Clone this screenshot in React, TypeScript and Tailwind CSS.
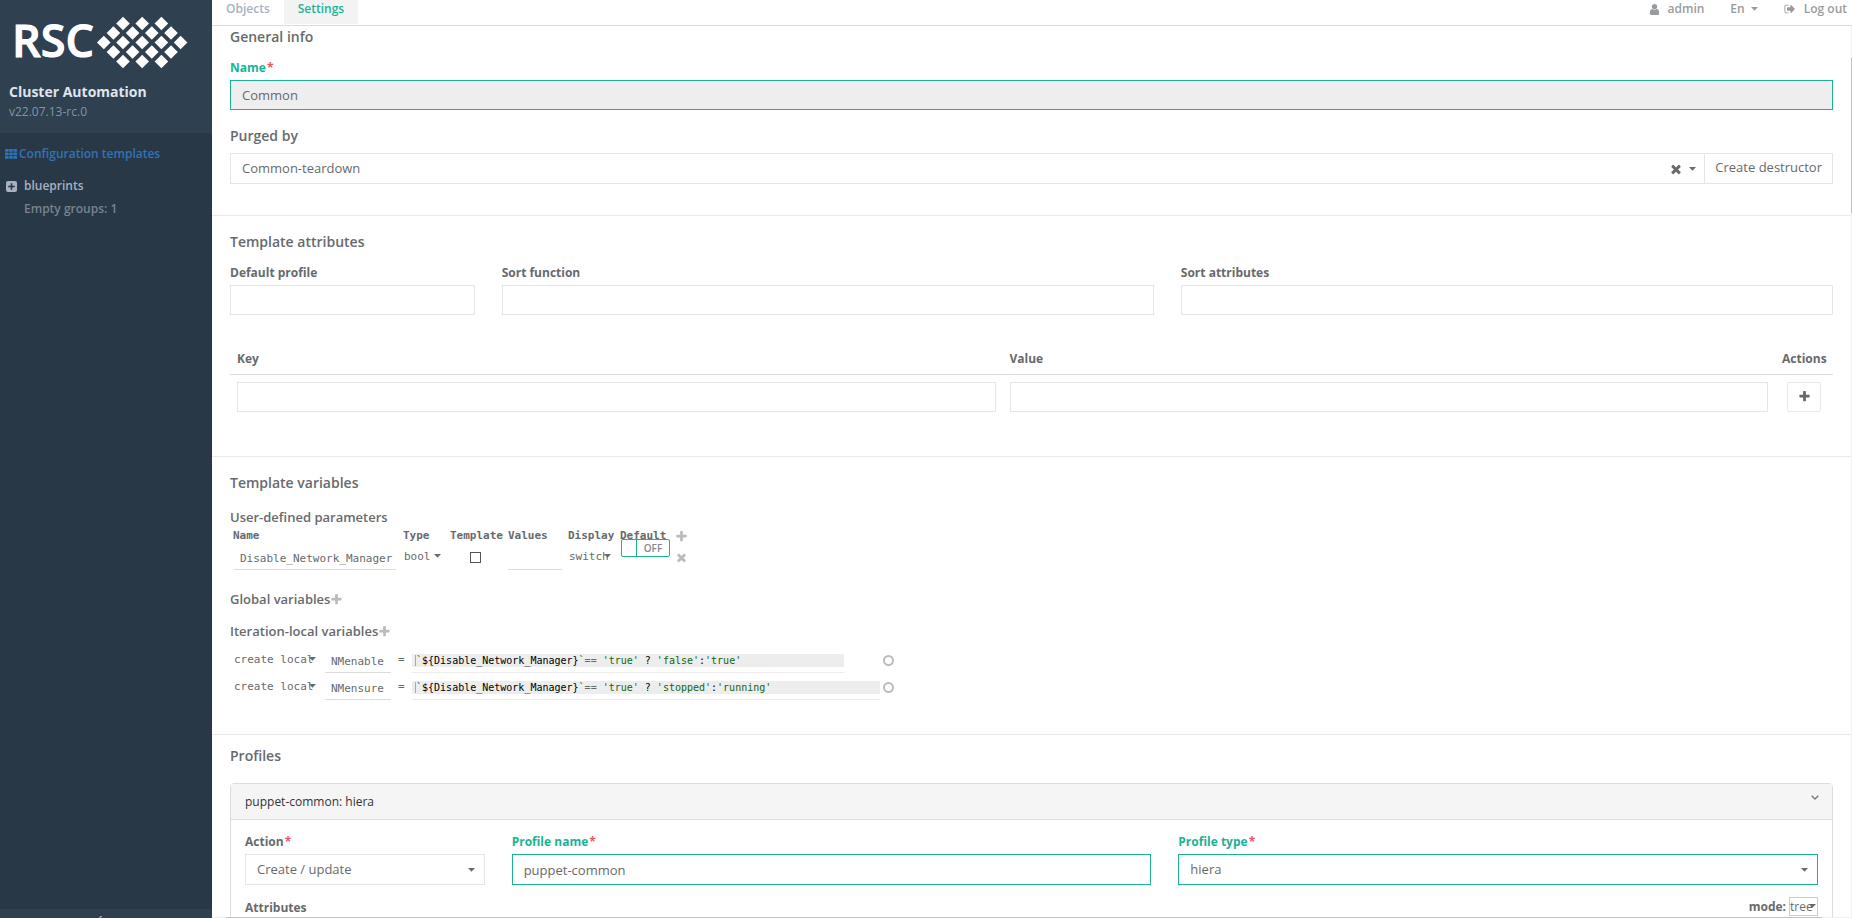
import { useState } from 'react'
import type { ReactNode } from 'react'
import clsx from 'clsx'

const ICONS = {
  plus: 'M1600 736v192q0 40-28 68t-68 28h-416v416q0 40-28 68t-68 28h-192q-40 0-68-28t-28-68v-416h-416q-40 0-68-28t-28-68v-192q0-40 28-68t68-28h416v-416q0-40 28-68t68-28h192q40 0 68 28t28 68v416h416q40 0 68 28t28 68z',
  times: 'M1490 1322q0 40-28 68l-136 136q-28 28-68 28t-68-28l-294-294-294 294q-28 28-68 28t-68-28l-136-136q-28-28-28-68t28-68l294-294-294-294q-28-28-28-68t28-68l136-136q28-28 68-28t68 28l294 294 294-294q28-28 68-28t68 28l136 136q28 28 28 68t-28 68l-294 294 294 294q28 28 28 68z',
  user: 'M1536 1399q0 109-62.5 187t-150.5 78h-854q-88 0-150.5-78t-62.5-187q0-85 8.5-160.5t31.5-152 58.5-131 94-89 134.5-34.5q131 128 313 128t313-128q76 0 134.5 34.5t94 89 58.5 131 31.5 152 8.5 160.5zm-256-887q0 159-112.5 271.5t-271.5 112.5-271.5-112.5-112.5-271.5 112.5-271.5 271.5-112.5 271.5 112.5 112.5 271.5z',
  signOut: 'M704 1440q0 4 1 20t.5 26.5-3 23.5-10 19.5-20.5 6.5h-320q-119 0-203.5-84.5t-84.5-203.5v-704q0-119 84.5-203.5t203.5-84.5h320q13 0 22.5 9.5t9.5 22.5q0 4 1 20t.5 26.5-3 23.5-10 19.5-20.5 6.5h-320q-66 0-113 47t-47 113v704q0 66 47 113t113 47h312l11.5 1 11.5 3 8 5.5 7 9 2 13.5zm928-544q0 26-19 45l-544 544q-19 19-45 19t-45-19-19-45v-288h-448q-26 0-45-19t-19-45v-384q0-26 19-45t45-19h448v-288q0-26 19-45t45-19 45 19l544 544q19 19 19 45z',
}

function Icon({ name, className }: { name: keyof typeof ICONS; className?: string }) {
  return (
    <svg viewBox="0 0 1792 1792" fill="currentColor" aria-hidden="true" className={clsx('shrink-0', className)}>
      <path d={ICONS[name]} />
    </svg>
  )
}

function Caret({ className }: { className?: string }) {
  return (
    <svg viewBox="0 0 7 4" fill="currentColor" aria-hidden="true" className={clsx('h-1 w-[7px] shrink-0', className)}>
      <path d="M0 0h7L3.5 3.8z" />
    </svg>
  )
}

function Logo() {
  const rows = [
    { y: 8.5, xs: [26, 45.2, 64.4] },
    { y: 18, xs: [16.4, 35.6, 54.8, 74] },
    { y: 27.5, xs: [6.8, 26, 45.2, 64.4, 83.6] },
    { y: 37, xs: [16.4, 35.6, 54.8, 74] },
    { y: 46.5, xs: [26, 45.2, 64.4] },
  ]
  return (
    <div className="flex items-start gap-[3px] pl-[3px] text-white">
      <span className="h-[54px] text-[45px] leading-[50px] font-semibold [-webkit-text-stroke:1px_white]">RSC</span>
      <svg viewBox="0 0 91 54" fill="currentColor" aria-hidden="true" className="h-[54px] w-[91px]">
        {rows.map((row) => row.xs.map((x) => (
          <path key={`${x}-${row.y}`} d={`M${x - 6.8} ${row.y}l6.8 -6.8l6.8 6.8l-6.8 6.8z`} />
        )))}
      </svg>
    </div>
  )
}

interface FieldProps {
  id: string
  label: string
  required?: boolean
  valid?: boolean
  className?: string
  children: ReactNode
}

function Field({ id, label, required, valid, className, children }: FieldProps) {
  return (
    <div className={className}>
      <label htmlFor={id} className={clsx('mb-1 block text-xs leading-4 font-bold', valid && 'text-[#1ab394]')}>
        {label}
        {required && <span className="ml-px text-[#ed5565]">*</span>}
      </label>
      {children}
    </div>
  )
}

const inputClass = 'block h-[30px] w-full border border-[#e5e6e7] bg-white px-[11px] text-[13px] outline-none'

interface SelectProps {
  id?: string
  label?: string
  options: string[]
  className?: string
  caretClass: string
}

function Select({ id, label, options, className, caretClass }: SelectProps) {
  return (
    <div className="relative">
      <select id={id} aria-label={label} className={clsx('block appearance-none outline-none', className)}>
        {options.map((option) => <option key={option}>{option}</option>)}
      </select>
      <Caret className={clsx('pointer-events-none absolute', caretClass)} />
    </div>
  )
}

function Section({ title, className, children }: { title: string; className?: string; children: ReactNode }) {
  return (
    <section className={clsx('px-[18px]', className)}>
      <h3 className="text-sm leading-5 font-semibold">{title}</h3>
      {children}
    </section>
  )
}

const locals = [
  { name: 'NMenable', yes: "'false'", no: "'true'", width: 'w-[432px]' },
  { name: 'NMensure', yes: "'stopped'", no: "'running'", width: 'w-[468px]' },
]

function Sidebar() {
  return (
    <aside className="flex w-[212px] shrink-0 flex-col bg-[#293846]">
      <div className="h-[133px] bg-[#2f4050] pt-[15px] pl-[9px]">
        <Logo />
        <h1 className="mt-[13px] text-sm leading-5 font-bold text-[#dfe4ed]">Cluster Automation</h1>
        <p className="text-xs leading-5 text-[#8095a8]">v22.07.13-rc.0</p>
      </div>
      <nav className="flex-1 pt-3 text-xs font-semibold">
        <a href="#templates" className="flex h-[18px] items-center gap-0.5 pl-[5px] text-[#2f74b8]">
          <svg viewBox="0 0 12 10" fill="currentColor" aria-hidden="true" className="h-[10px] w-3">
            {[0, 3.5, 7].map((y) => [0, 4.2, 8.4].map((x) => (
              <rect key={`${x}-${y}`} x={x} y={y} width="3.6" height="2.8" rx="0.4" />
            )))}
          </svg>
          Configuration templates
        </a>
        <div className="mt-[14px] flex h-[18px] items-center gap-[7px] pl-[6px] text-[#a7b1c2]">
          <svg viewBox="0 0 11 11" aria-hidden="true" className="h-[11px] w-[11px]">
            <rect width="11" height="11" rx="2" fill="currentColor" />
            <path d="M4.7 2.2h1.6v2.5h2.5v1.6H6.3v2.5H4.7V6.3H2.2V4.7h2.5z" fill="#293846" />
          </svg>
          blueprints
        </div>
        <p className="mt-[5px] pl-6 leading-[18px] text-[#78838f]">Empty groups: 1</p>
      </nav>
      <footer className="flex h-[9px] items-end bg-[#2f4050] pl-[99px]">
        <svg viewBox="0 0 3 2" fill="none" stroke="#fff" aria-hidden="true" className="h-0.5 w-[3px]">
          <path d="M0.5 2L2.5 0" />
        </svg>
      </footer>
    </aside>
  )
}

function TopBar() {
  return (
    <header className="flex h-[26px] shrink-0 justify-between border-b border-[#d9dbdb] text-xs leading-[18px] font-semibold">
      <nav className="flex">
        <a href="#objects" className="px-[14px] text-[#a7b1c2]">Objects</a>
        <a href="#settings" className="h-6 bg-[#f3f3f4] px-[14px] text-[#1ab394]">Settings</a>
      </nav>
      <div className="flex items-start gap-[26px] pr-[5px] text-[#999c9e]">
        <a href="#admin" className="flex items-center gap-[7px]">
          <Icon name="user" className="h-[13px] w-[13px]" />
          admin
        </a>
        <button type="button" className="flex items-center gap-1.5">
          En
          <Caret />
        </button>
        <a href="#logout" className="flex items-center gap-2">
          <Icon name="signOut" className="h-3 w-3" />
          Log out
        </a>
      </div>
    </header>
  )
}

function Parameters() {
  const [enabled, setEnabled] = useState(false)
  return (
    <table className="mt-px w-[463px] table-fixed font-['DejaVu_Sans_Mono',monospace] text-[11px]">
      <colgroup>
        <col className="w-[170px]" />
        <col className="w-[47px]" />
        <col className="w-[58px]" />
        <col className="w-[60px]" />
        <col className="w-[52px]" />
        <col className="w-[56px]" />
        <col className="w-5" />
      </colgroup>
      <thead>
        <tr className="h-4 text-left leading-4">
          {['Name', 'Type', 'Template', 'Values', 'Display', 'Default'].map((name) => (
            <th key={name} className="px-[3px] font-bold">{name}</th>
          ))}
          <th className="pl-0.5">
            <button type="button" aria-label="Add" className="block text-[#bcbcbc]">
              <Icon name="plus" className="h-[13px] w-[13px]" />
            </button>
          </th>
        </tr>
      </thead>
      <tbody>
        <tr className="h-[26px]">
          <td className="px-1">
            <input aria-label="Name" defaultValue="Disable_Network_Manager" className="block h-[26px] w-full border-b border-[#dcdcdc] pt-[3px] pl-[6px] outline-none" />
          </td>
          <td className="px-1">
            <Select label="Type" options={['bool']} className="h-[22px] w-full" caretClass="top-2 right-0.5" />
          </td>
          <td className="pr-1.5 pl-1">
            <input type="checkbox" aria-label="Template" className="mx-auto block h-[11px] w-[11px] appearance-none border border-[#555]" />
          </td>
          <td className="px-[3px]">
            <input aria-label="Values" className="block h-[26px] w-full border-b border-[#dcdcdc] outline-none" />
          </td>
          <td className="px-1">
            <Select label="Display" options={['switch']} className="h-[22px] w-full" caretClass="top-2 right-0.5" />
          </td>
          <td className="px-1 align-top">
            <button
              type="button"
              role="switch"
              aria-checked={enabled}
              onClick={() => setEnabled(!enabled)}
              className="-mt-[5px] flex h-[18px] w-[49px] rounded-xs border border-[#1ab394] bg-white font-['Open_Sans',sans-serif] text-[10px] leading-4 font-semibold text-[#888]"
            >
              <span className="h-4 w-[15px] shrink-0 border-r border-[#1ab394]" />
              <span className="flex-1 text-center">OFF</span>
            </button>
          </td>
          <td className="pl-0.5">
            <button type="button" aria-label="Remove" className="block text-[#bcbcbc]">
              <Icon name="times" className="h-[13px] w-[13px]" />
            </button>
          </td>
        </tr>
      </tbody>
    </table>
  )
}

function LocalVariables() {
  return (
    <div className="mt-[9px] pl-1 font-['DejaVu_Sans_Mono',monospace] text-[11px]">
      {locals.map((item) => (
        <div key={item.name} className="flex h-[27px] items-start">
          <div className="w-[82px]">
            <Select label="Scope" options={['create local']} className="h-5 w-full" caretClass="top-[7px] right-0" />
          </div>
          <input aria-label="Variable" defaultValue={item.name} className="ml-[9px] h-[23px] w-[66px] border-b border-[#dcdcdc] px-1.5 outline-none" />
          <span className="ml-[7px] w-[14px] leading-5">=</span>
          <div className="w-[468px]">
            <div className={clsx('border-b border-[#ececec] pt-1 pb-[5px]', item.width)}>
              <code className="block bg-[#ededed] pl-[3px] font-['DejaVu_Sans_Mono',monospace] text-[10px] leading-[13px] whitespace-pre text-black">
                <span className="border-l border-[#aaa] text-[#116611]">`</span>
                {'${Disable_Network_Manager}'}
                <span className="text-[#116611]">`</span>
                <span className="text-[#676a6c]">== </span>
                <span className="text-[#116611]">'true'</span>
                {' ? '}
                <span className="text-[#116611]">{item.yes}</span>
                :
                <span className="text-[#116611]">{item.no}</span>
              </code>
            </div>
          </div>
          <input type="radio" name="local" aria-label={item.name} className="mt-[5px] ml-[3px] h-[11px] w-[11px] appearance-none rounded-full border-2 border-[#bcbcbc]" />
        </div>
      ))}
    </div>
  )
}

export default function App() {
  return (
    <div className="flex h-screen overflow-hidden bg-white font-['Open_Sans',sans-serif] text-[13px] text-[#676a6c]">
      <Sidebar />
      <div className="flex min-w-0 flex-1 flex-col">
        <TopBar />
        <div className="flex min-h-0 flex-1">
          <main className="min-w-0 flex-1 overflow-hidden">
            <Section title="General info" className="border-b border-[#e7eaec] pt-px pb-[31px]">
              <Field id="name" label="Name" required valid className="mt-[13px]">
                <input id="name" readOnly defaultValue="Common" className="block h-[30px] w-full border border-[#1ab394] bg-[#eee] px-[11px] text-[13px] outline-none" />
              </Field>
              <label htmlFor="purged" className="mt-4 mb-[7px] block text-sm leading-5 font-semibold">Purged by</label>
              <div className="flex h-[31px] border border-[#e5e6e7]">
                <div className="relative flex-1">
                  <select id="purged" className="block h-full w-full appearance-none px-[11px] outline-none">
                    <option>Common-teardown</option>
                  </select>
                  <div className="pointer-events-none absolute inset-y-0 right-2 flex items-center gap-1.5">
                    <Icon name="times" className="h-[14px] w-[14px]" />
                    <Caret />
                  </div>
                </div>
                <button type="button" className="border-l border-[#e5e6e7] px-[10px] pb-0.5">Create destructor</button>
              </div>
            </Section>

            <Section title="Template attributes" className="border-b border-[#e7eaec] pt-4 pb-[37px]">
              <div className="mt-[13px] grid grid-cols-12 gap-[27px]">
                <Field id="default-profile" label="Default profile" className="col-span-2">
                  <input id="default-profile" className={inputClass} />
                </Field>
                <Field id="sort-function" label="Sort function" className="col-span-5">
                  <input id="sort-function" className={inputClass} />
                </Field>
                <Field id="sort-attributes" label="Sort attributes" className="col-span-5">
                  <input id="sort-attributes" className={inputClass} />
                </Field>
              </div>
              <table className="mt-9 w-full table-fixed">
                <colgroup>
                  <col />
                  <col />
                  <col className="w-[58px]" />
                </colgroup>
                <thead>
                  <tr className="border-b border-[#dddddd] text-left text-xs leading-4">
                    <th className="px-[7px] pb-[7px]">Key</th>
                    <th className="px-[7px] pb-[7px]">Value</th>
                    <th className="px-[7px] pb-[7px]">Actions</th>
                  </tr>
                </thead>
                <tbody>
                  <tr>
                    <td className="px-[7px] py-[7px]"><input aria-label="Key" className={inputClass} /></td>
                    <td className="px-[7px] py-[7px]"><input aria-label="Value" className={inputClass} /></td>
                    <td className="px-[7px] py-[7px]">
                      <button type="button" aria-label="Add" className="mx-auto flex h-[30px] w-[34px] items-center justify-center rounded-xs border border-[#e7eaec] pb-0.5">
                        <Icon name="plus" className="h-[13px] w-[13px]" />
                      </button>
                    </td>
                  </tr>
                </tbody>
              </table>
            </Section>

            <Section title="Template variables" className="border-b border-[#e7eaec] pt-4 pb-[30px]">
              <h4 className="mt-[14px] leading-5 font-semibold">User-defined parameters</h4>
              <Parameters />
              <h4 className="mt-[19px] flex items-center leading-5 font-semibold">
                Global variables
                <button type="button" aria-label="Add" className="text-[#bcbcbc]"><Icon name="plus" className="h-[13px] w-[13px]" /></button>
              </h4>
              <h4 className="mt-3 flex items-center leading-5 font-semibold">
                Iteration-local variables
                <button type="button" aria-label="Add" className="text-[#bcbcbc]"><Icon name="plus" className="h-[13px] w-[13px]" /></button>
              </h4>
              <LocalVariables />
            </Section>

            <Section title="Profiles" className="pt-[11px]">
              <div className="mt-[17px] rounded-t-sm border border-[#dddddd]">
                <button type="button" className="flex h-9 w-full items-center justify-between border-b border-[#dddddd] bg-[#f5f5f5] pr-[13px] pl-[14px] text-xs text-[#333]">
                  puppet-common: hiera
                  <svg viewBox="0 0 8 5" fill="none" stroke="#777" strokeWidth="1.3" aria-hidden="true" className="mb-2 h-[5px] w-2">
                    <path d="M0.7 0.7L4 4l3.3-3.3" />
                  </svg>
                </button>
                <div className="px-[14px] pt-[14px] pb-4">
                  <div className="grid grid-cols-12 gap-[27px]">
                    <Field id="action" label="Action" required className="col-span-2">
                      <Select id="action" options={['Create / update']} className="h-[31px] w-full border border-[#e5e6e7] px-[11px]" caretClass="top-[14px] right-[10px]" />
                    </Field>
                    <Field id="profile-name" label="Profile name" required valid className="col-span-5">
                      <input id="profile-name" defaultValue="puppet-common" className="block h-[31px] w-full border border-[#1ab394] px-[11px] outline-none" />
                    </Field>
                    <Field id="profile-type" label="Profile type" required valid className="col-span-5">
                      <Select id="profile-type" options={['hiera']} className="h-[31px] w-full border border-[#1ab394] px-[11px]" caretClass="top-[14px] right-[10px]" />
                    </Field>
                  </div>
                  <div className="mt-3 flex items-start justify-between text-xs">
                    <h4 className="pt-[3px] leading-4 font-bold">Attributes</h4>
                    <div className="flex items-center gap-[3px]">
                      <label htmlFor="mode" className="font-bold">mode:</label>
                      <Select id="mode" options={['tree']} className="h-[19px] w-[29px] border border-[#ccc]" caretClass="top-[7px] right-[2px]" />
                    </div>
                  </div>
                </div>
              </div>
            </Section>
          </main>
          {/* Vertical scroll track */}
          <div className="w-px bg-[#f0f0f0] pt-8">
            <div className="h-[18%] bg-[#c1c1c1]" />
          </div>
        </div>
        {/* Horizontal scroll track */}
        <div className="h-px shrink-0 bg-[#f0f0f0] pr-[30px] pl-[14px]">
          <div className="h-full bg-[#c1c1c1]" />
        </div>
      </div>
    </div>
  )
}
